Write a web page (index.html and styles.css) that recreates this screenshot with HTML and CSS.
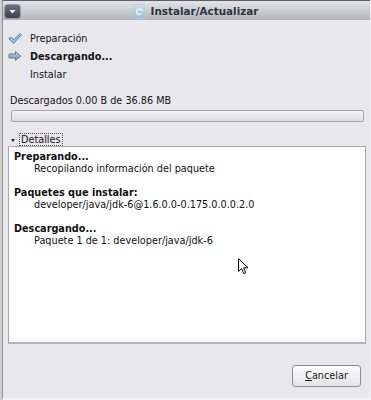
FILE: index.html
```html
<!DOCTYPE html>
<html lang="es">
<head>
<meta charset="utf-8">
<title>Instalar/Actualizar</title>
<link rel="stylesheet" href="styles.css">
</head>
<body>
<div class="window">
  <div class="titlebar">
    <span class="menu-btn">
      <svg width="17" height="15" viewBox="0 0 17 15"><defs><linearGradient id="mb" x1="0" y1="0" x2="0" y2="1"><stop offset="0" stop-color="#6c7381"/><stop offset="1" stop-color="#3c4250"/></linearGradient></defs><rect x="0.5" y="0.5" width="16" height="14" rx="3" fill="url(#mb)" stroke="#9aa0a9"/><path d="M5.5 6 L11.5 6 L8.5 9.5 Z" fill="#ffffff"/></svg>
    </span>
    <div class="title">
      <svg class="title-icon" width="12" height="15" viewBox="0 0 12 15"><defs><linearGradient id="ti" x1="0" y1="0" x2="0" y2="1"><stop offset="0" stop-color="#cfe0ea"/><stop offset="1" stop-color="#9dbdd0"/></linearGradient></defs><rect x="0.5" y="0.5" width="11" height="14" rx="2.5" fill="url(#ti)" stroke="#b4cad8"/><path d="M8.4 6 A2.8 2.8 0 1 0 8.6 9.2" fill="none" stroke="#f4f9fc" stroke-width="1.2"/><path d="M6.8 5.4 L9.4 4.6 L9.2 7.4 Z" fill="#f4f9fc"/></svg>
      <span class="title-text">Instalar/Actualizar</span>
    </div>
  </div>
  <div class="content">
    <ul class="steps">
      <li class="step">
        <span class="step-icon"><svg width="14" height="11" viewBox="0 0 14 11"><path d="M0.8 5.6 L3.4 4.4 L5.6 7 L12.2 0.6 L13.4 1.8 L5.6 10.3 Z" fill="#a9cdf0" stroke="#3f73b8" stroke-width="1" stroke-linejoin="round"/></svg></span>
        <span>Preparación</span>
      </li>
      <li class="step step-current">
        <span class="step-icon"><svg width="14" height="10" viewBox="0 0 14 10"><defs><linearGradient id="ar" x1="0" y1="0" x2="0" y2="1"><stop offset="0" stop-color="#c2cee0"/><stop offset="1" stop-color="#7f90aa"/></linearGradient></defs><path d="M1 3 H7.5 V0.6 L12.8 5 L7.5 9.4 V7 H1 Z" fill="url(#ar)" stroke="#667892" stroke-width="1" stroke-linejoin="round"/></svg></span>
        <span>Descargando...</span>
      </li>
      <li class="step">
        <span class="step-icon"></span>
        <span>Instalar</span>
      </li>
    </ul>
    <div class="progress-label">Descargados 0.00 B de 36.86 MB</div>
    <div class="progress"></div>
    <div class="expander">
      <span class="expander-arrow"></span>
      <span class="expander-label">Detalles</span>
    </div>
    <div class="details">
      <div class="group">
        <div class="heading">Preparando...</div>
        <div class="line">Recopilando información del paquete</div>
      </div>
      <div class="group">
        <div class="heading">Paquetes que instalar:</div>
        <div class="line">developer/java/jdk-6@1.6.0.0-0.175.0.0.0.2.0</div>
      </div>
      <div class="group">
        <div class="heading">Descargando...</div>
        <div class="line">Paquete 1 de 1: developer/java/jdk-6</div>
      </div>
    </div>
    <div class="buttons">
      <button class="btn"><span class="mnemonic">C</span>ancelar</button>
    </div>
  </div>
  <svg class="cursor" width="12" height="17" viewBox="0 0 12 17"><path d="M0.5 0.5 L0.5 13.5 L3.6 10.6 L5.8 15.6 L7.8 14.7 L5.7 9.8 L9.9 9.8 Z" fill="#ffffff" stroke="#000000" stroke-width="1" stroke-linejoin="miter"/></svg>
</div>
</body>
</html>
```

FILE: styles.css
```css
html, body {
  margin: 0;
  padding: 0;
}

body {
  width: 371px;
  height: 400px;
  overflow: hidden;
  background: #cfcfcf;
  display: flex;
  font-family: "DejaVu Sans", "Liberation Sans", sans-serif;
  color: #141414;
}

.window {
  position: relative;
  margin-left: 2px;
  flex: 1;
  height: 400px;
  box-sizing: border-box;
  border-left: 1px solid #8e8e92;
  border-right: 1px solid #f1f1f3;
  border-bottom: 2px solid #f3f3f5;
  background: #e8e8ec;
  display: flex;
  flex-direction: column;
}

.titlebar {
  height: 19px;
  border-top: 1px solid #5e6068;
  background: linear-gradient(#e1e3e7 0%, #ced1d7 45%, #aeb3bc 100%);
  display: flex;
  align-items: center;
}

.menu-btn {
  display: flex;
  margin-left: 1px;
  margin-top: 1px;
}

.title {
  flex: 1;
  display: flex;
  align-items: center;
  justify-content: center;
  gap: 6px;
  margin-top: 1px;
}

.title-text {
  font-weight: bold;
  font-size: 10.4px;
  color: #2f333b;
}

.content {
  flex: 1;
  display: flex;
  flex-direction: column;
  padding: 9px 4px 11px 5px;
  font-size: 9.7px;
}

.steps {
  list-style: none;
  margin: 0;
  padding: 0;
}

.step {
  height: 18px;
  display: flex;
  align-items: center;
}

.step-icon {
  width: 22px;
  display: flex;
  align-items: center;
}

.step-current {
  font-weight: bold;
}

.progress-label {
  margin-top: 12px;
  line-height: 12px;
  padding-left: 2px;
}

.progress {
  margin: 3px 2px 0 3px;
  height: 12px;
  box-sizing: border-box;
  border: 1px solid #a3a3a8;
  border-radius: 2px;
  background: linear-gradient(#f3f3f4 0%, #e9e9eb 50%, #dcdcdf 100%);
}

.expander {
  margin-top: 11px;
  height: 13px;
  display: flex;
  align-items: center;
}

.expander-arrow {
  margin-left: 3px;
  margin-top: 1px;
  width: 0;
  height: 0;
  border-left: 2.5px solid transparent;
  border-right: 2.5px solid transparent;
  border-top: 3px solid #222;
}

.expander-label {
  margin-left: 4px;
  height: 13px;
  box-sizing: border-box;
  border: 1px dotted #555;
  padding: 0 1px 0 1px;
  line-height: 12px;
}

.details {
  flex: 1;
  background: #ffffff;
  border: 1px solid #a7a7ad;
  border-bottom-width: 2px;
  border-bottom-color: #b5b5bb;
  padding: 4px 5px;
  line-height: 12px;
  color: #111;
}

.group + .group {
  margin-top: 12px;
}

.heading {
  font-weight: bold;
}

.line {
  padding-left: 20px;
}

.buttons {
  margin-top: 21px;
  display: flex;
  justify-content: flex-end;
  padding-right: 5px;
}

.btn {
  width: 69px;
  height: 22px;
  box-sizing: border-box;
  border: 1px solid #8c8c92;
  border-radius: 3px;
  background: linear-gradient(#fdfdfd 0%, #f1f1f3 50%, #e2e2e6 100%);
  font-family: "DejaVu Sans", "Liberation Sans", sans-serif;
  font-size: 9.7px;
  color: #1a1a1a;
  padding: 0;
  line-height: 20px;
}

.mnemonic {
  text-decoration: underline;
}

.cursor {
  position: absolute;
  left: 235px;
  top: 258px;
}
```
